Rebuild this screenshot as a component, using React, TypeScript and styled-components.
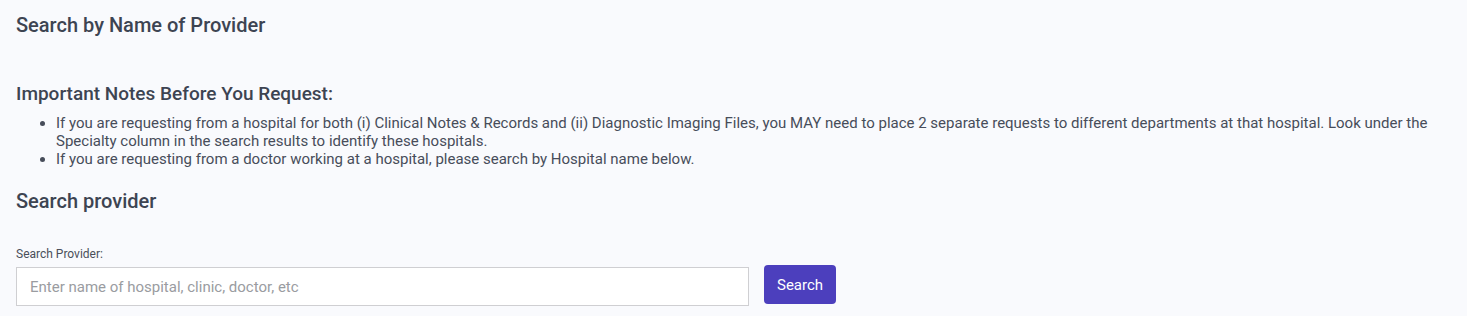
import React from "react";
import styled, { createGlobalStyle } from "styled-components";

const Global = createGlobalStyle`
  html, body { margin: 0; padding: 0; background: #f9fafd; }
  body { font-family: Roboto, "Noto Sans", Arial, sans-serif; color: #3f4655; }
  * { box-sizing: border-box; }
`;

const Page = styled.div`
  padding: 13px 16px 0 16px;
  display: flex;
  flex-direction: column;
`;

const Title = styled.h2<{ $size: number }>`
  margin: 0;
  font-size: ${(p) => p.$size}px;
  font-weight: 500;
  line-height: 24px;
  color: #3d4452;
`;

const Notes = styled.section`
  margin-top: 45px;
`;

const List = styled.ul`
  margin: 8px 0 0 0;
  padding-left: 40px;
  font-size: 15px;
  line-height: 18px;
  color: #474d5a;
  li { margin: 0; }
`;

const SearchSection = styled.section`
  margin-top: 21px;
`;

const Label = styled.label`
  display: block;
  margin-top: 34px;
  font-size: 12px;
  line-height: 14px;
  color: #4a4f5a;
`;

const Row = styled.div`
  margin-top: 4px;
  display: flex;
  align-items: flex-start;
  gap: 15px;
`;

const Input = styled.input`
  width: 733px;
  height: 39px;
  margin-top: 2px;
  border: 1px solid #cfcfd2;
  background: #ffffff;
  padding: 0 13px;
  font-family: Roboto, Arial, sans-serif;
  font-size: 15px;
  color: #333;
  outline: none;
  &::placeholder { color: #9a9ca1; }
`;

const Button = styled.button`
  height: 39px;
  padding: 0 13px;
  border: none;
  border-radius: 4px;
  background: #4c3fbd;
  color: #ffffff;
  font-family: Roboto, Arial, sans-serif;
  font-size: 15px;
  font-weight: 400;
  cursor: pointer;
`;

export default function App() {
  return (
    <>
      <Global />
      <Page>
        <Title $size={20}>Search by Name of Provider</Title>
        <Notes>
          <Title $size={19}>Important Notes Before You Request:</Title>
          <List>
            <li>
              If you are requesting from a hospital for both (i) Clinical Notes &amp; Records and (ii) Diagnostic Imaging Files, you MAY need to place 2 separate requests to different departments at that hospital. Look under the Specialty column in the search results to identify these hospitals.
            </li>
            <li>If you are requesting from a doctor working at a hospital, please search by Hospital name below.</li>
          </List>
        </Notes>
        <SearchSection>
          <Title $size={20}>Search provider</Title>
          <Label htmlFor="prov">Search Provider:</Label>
          <Row>
            <Input id="prov" placeholder="Enter name of hospital, clinic, doctor, etc" />
            <Button>Search</Button>
          </Row>
        </SearchSection>
      </Page>
    </>
  );
}
